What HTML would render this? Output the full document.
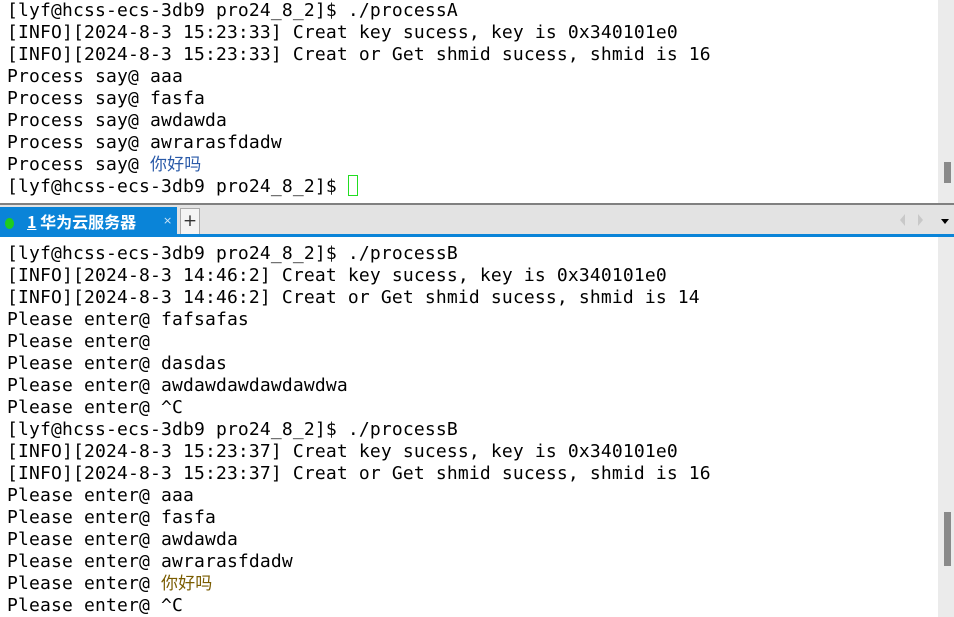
<!DOCTYPE html>
<html><head><meta charset="utf-8"><style>
body{margin:0;width:954px;height:617px;overflow:hidden;background:#fff;position:relative;font-family:"DejaVu Sans Mono","Liberation Mono","Noto Sans CJK SC",monospace;font-size:18px;color:#000}
.p{position:absolute;left:7px;white-space:pre;line-height:22px;letter-spacing:0.16px}
.cj{font-family:"Noto Sans CJK SC",sans-serif;font-size:17px;line-height:0}
</style></head><body>
<div class="p" style="top:0px">[lyf@hcss-ecs-3db9 pro24_8_2]$ ./processA
[INFO][2024-8-3 15:23:33] Creat key sucess, key is 0x340101e0
[INFO][2024-8-3 15:23:33] Creat or Get shmid sucess, shmid is 16
Process say@ aaa
Process say@ fasfa
Process say@ awdawda
Process say@ awrarasfdadw
Process say@ <span class="cj" style="color:#2a5aa8">你好吗</span>
[lyf@hcss-ecs-3db9 pro24_8_2]$ </div>
<div style="position:absolute;left:348px;top:175px;width:8px;height:19px;border:1px solid #22dd22"></div>
<div style="position:absolute;left:938px;top:0;width:16px;height:204px;background:#ebebeb"></div>
<div style="position:absolute;left:944px;top:162px;width:7px;height:21px;background:#8a8a8a"></div>
<div style="position:absolute;left:0;top:203px;width:954px;height:2px;background:#808080"></div>
<div style="position:absolute;left:0;top:205px;width:954px;height:29px;background:#e3e3e3"></div>
<div style="position:absolute;left:0;top:207px;width:177px;height:28px;background:#0a84d8;color:#fff;font-family:'Noto Sans CJK SC',sans-serif;font-size:16px;font-weight:bold;line-height:28px;white-space:nowrap">
<span style="display:inline-block;width:9px;height:11px;border-radius:50%;background:#1fcc1f;margin-left:5px;vertical-align:-1px"></span><span style="margin-left:13px;text-decoration:underline">1</span> 华为云服务器<span style="position:absolute;left:163px;top:0;font-family:'DejaVu Sans',sans-serif;font-size:11px;font-weight:normal;color:#cfe6f8">×</span></div>
<div style="position:absolute;left:180px;top:208px;width:18px;height:25px;background:#f4f4f4;border:1px solid #aaa;border-bottom:none;text-align:center;font-family:'DejaVu Sans',sans-serif;font-size:17px;line-height:24px;color:#333">+</div>
<div style="position:absolute;left:900px;top:214px;width:0;height:0;border-top:6px solid transparent;border-bottom:6px solid transparent;border-right:5px solid #c8c8c8"></div>
<div style="position:absolute;left:918px;top:214px;width:0;height:0;border-top:6px solid transparent;border-bottom:6px solid transparent;border-left:5px solid #c8c8c8"></div>
<div style="position:absolute;left:941px;top:219px;width:0;height:0;border-left:4px solid transparent;border-right:4px solid transparent;border-top:5px solid #000"></div>
<div style="position:absolute;left:0;top:234px;width:954px;height:3px;background:#0a84d8"></div>
<div class="p" style="top:243px">[lyf@hcss-ecs-3db9 pro24_8_2]$ ./processB
[INFO][2024-8-3 14:46:2] Creat key sucess, key is 0x340101e0
[INFO][2024-8-3 14:46:2] Creat or Get shmid sucess, shmid is 14
Please enter@ fafsafas
Please enter@
Please enter@ dasdas
Please enter@ awdawdawdawdawdwa
Please enter@ ^C
[lyf@hcss-ecs-3db9 pro24_8_2]$ ./processB
[INFO][2024-8-3 15:23:37] Creat key sucess, key is 0x340101e0
[INFO][2024-8-3 15:23:37] Creat or Get shmid sucess, shmid is 16
Please enter@ aaa
Please enter@ fasfa
Please enter@ awdawda
Please enter@ awrarasfdadw
Please enter@ <span class="cj" style="color:#7a5c00">你好吗</span>
Please enter@ ^C</div>
<div style="position:absolute;left:938px;top:237px;width:16px;height:380px;background:#ebebeb"></div>
<div style="position:absolute;left:944px;top:512px;width:7px;height:54px;background:#8a8a8a"></div>
</body></html>
